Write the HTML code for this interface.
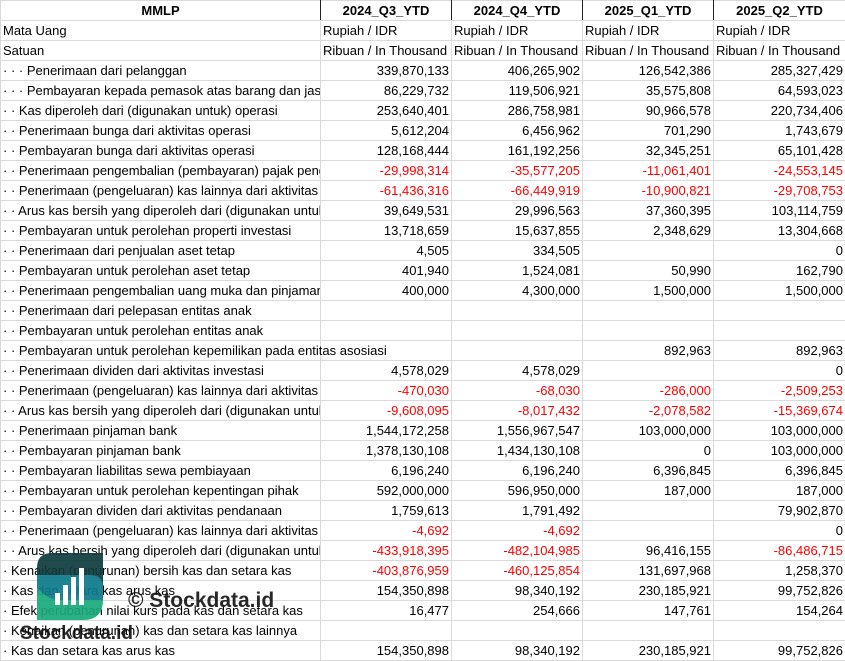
<!DOCTYPE html>
<html><head><meta charset="utf-8"><style>
html,body{margin:0;padding:0;background:#fff;width:845px;height:661px;overflow:hidden}
table{border-collapse:collapse;table-layout:fixed;width:845px;font-family:"Liberation Sans",sans-serif;font-size:13px;color:#000;position:absolute;left:0;top:0}
td{height:19px;padding:0 2px;border:1px solid #dadada;white-space:nowrap;overflow:hidden;line-height:19px;max-width:0}
tr.h td{font-weight:bold;text-align:center;border-right:1px solid #222;border-bottom:1px solid #dadada}
td.n{text-align:right}
.r{color:#f00}
td.s{overflow:visible;position:relative;z-index:1}
</style></head><body>
<table>
<colgroup><col style="width:320px"><col style="width:131px"><col style="width:131px"><col style="width:131px"><col style="width:132px"></colgroup>
<tr class="h"><td>MMLP</td><td>2024_Q3_YTD</td><td>2024_Q4_YTD</td><td>2025_Q1_YTD</td><td>2025_Q2_YTD</td></tr>
<tr><td>Mata Uang</td><td>Rupiah / IDR</td><td>Rupiah / IDR</td><td>Rupiah / IDR</td><td>Rupiah / IDR</td></tr>
<tr><td>Satuan</td><td>Ribuan / In Thousand</td><td>Ribuan / In Thousand</td><td>Ribuan / In Thousand</td><td>Ribuan / In Thousand</td></tr>
<tr><td>· · · Penerimaan dari pelanggan</td><td class="n">339,870,133</td><td class="n">406,265,902</td><td class="n">126,542,386</td><td class="n">285,327,429</td></tr>
<tr><td>· · · Pembayaran kepada pemasok atas barang dan jasa</td><td class="n">86,229,732</td><td class="n">119,506,921</td><td class="n">35,575,808</td><td class="n">64,593,023</td></tr>
<tr><td>· · Kas diperoleh dari (digunakan untuk) operasi</td><td class="n">253,640,401</td><td class="n">286,758,981</td><td class="n">90,966,578</td><td class="n">220,734,406</td></tr>
<tr><td>· · Penerimaan bunga dari aktivitas operasi</td><td class="n">5,612,204</td><td class="n">6,456,962</td><td class="n">701,290</td><td class="n">1,743,679</td></tr>
<tr><td>· · Pembayaran bunga dari aktivitas operasi</td><td class="n">128,168,444</td><td class="n">161,192,256</td><td class="n">32,345,251</td><td class="n">65,101,428</td></tr>
<tr><td>· · Penerimaan pengembalian (pembayaran) pajak penghasilan</td><td class="n r">-29,998,314</td><td class="n r">-35,577,205</td><td class="n r">-11,061,401</td><td class="n r">-24,553,145</td></tr>
<tr><td>· · Penerimaan (pengeluaran) kas lainnya dari aktivitas</td><td class="n r">-61,436,316</td><td class="n r">-66,449,919</td><td class="n r">-10,900,821</td><td class="n r">-29,708,753</td></tr>
<tr><td>· · Arus kas bersih yang diperoleh dari (digunakan untuk)</td><td class="n">39,649,531</td><td class="n">29,996,563</td><td class="n">37,360,395</td><td class="n">103,114,759</td></tr>
<tr><td>· · Pembayaran untuk perolehan properti investasi</td><td class="n">13,718,659</td><td class="n">15,637,855</td><td class="n">2,348,629</td><td class="n">13,304,668</td></tr>
<tr><td>· · Penerimaan dari penjualan aset tetap</td><td class="n">4,505</td><td class="n">334,505</td><td></td><td class="n">0</td></tr>
<tr><td>· · Pembayaran untuk perolehan aset tetap</td><td class="n">401,940</td><td class="n">1,524,081</td><td class="n">50,990</td><td class="n">162,790</td></tr>
<tr><td>· · Penerimaan pengembalian uang muka dan pinjaman</td><td class="n">400,000</td><td class="n">4,300,000</td><td class="n">1,500,000</td><td class="n">1,500,000</td></tr>
<tr><td>· · Penerimaan dari pelepasan entitas anak</td><td></td><td></td><td></td><td></td></tr>
<tr><td>· · Pembayaran untuk perolehan entitas anak</td><td></td><td></td><td></td><td></td></tr>
<tr><td class="s">· · Pembayaran untuk perolehan kepemilikan pada entitas asosiasi</td><td style="border-left-color:transparent"></td><td></td><td class="n">892,963</td><td class="n">892,963</td></tr>
<tr><td>· · Penerimaan dividen dari aktivitas investasi</td><td class="n">4,578,029</td><td class="n">4,578,029</td><td></td><td class="n">0</td></tr>
<tr><td>· · Penerimaan (pengeluaran) kas lainnya dari aktivitas</td><td class="n r">-470,030</td><td class="n r">-68,030</td><td class="n r">-286,000</td><td class="n r">-2,509,253</td></tr>
<tr><td>· · Arus kas bersih yang diperoleh dari (digunakan untuk)</td><td class="n r">-9,608,095</td><td class="n r">-8,017,432</td><td class="n r">-2,078,582</td><td class="n r">-15,369,674</td></tr>
<tr><td>· · Penerimaan pinjaman bank</td><td class="n">1,544,172,258</td><td class="n">1,556,967,547</td><td class="n">103,000,000</td><td class="n">103,000,000</td></tr>
<tr><td>· · Pembayaran pinjaman bank</td><td class="n">1,378,130,108</td><td class="n">1,434,130,108</td><td class="n">0</td><td class="n">103,000,000</td></tr>
<tr><td>· · Pembayaran liabilitas sewa pembiayaan</td><td class="n">6,196,240</td><td class="n">6,196,240</td><td class="n">6,396,845</td><td class="n">6,396,845</td></tr>
<tr><td>· · Pembayaran untuk perolehan kepentingan pihak</td><td class="n">592,000,000</td><td class="n">596,950,000</td><td class="n">187,000</td><td class="n">187,000</td></tr>
<tr><td>· · Pembayaran dividen dari aktivitas pendanaan</td><td class="n">1,759,613</td><td class="n">1,791,492</td><td></td><td class="n">79,902,870</td></tr>
<tr><td>· · Penerimaan (pengeluaran) kas lainnya dari aktivitas</td><td class="n r">-4,692</td><td class="n r">-4,692</td><td></td><td class="n">0</td></tr>
<tr><td>· · Arus kas bersih yang diperoleh dari (digunakan untuk)</td><td class="n r">-433,918,395</td><td class="n r">-482,104,985</td><td class="n">96,416,155</td><td class="n r">-86,486,715</td></tr>
<tr><td>· Kenaikan (penurunan) bersih kas dan setara kas</td><td class="n r">-403,876,959</td><td class="n r">-460,125,854</td><td class="n">131,697,968</td><td class="n">1,258,370</td></tr>
<tr><td>· Kas dan setara kas arus kas</td><td class="n">154,350,898</td><td class="n">98,340,192</td><td class="n">230,185,921</td><td class="n">99,752,826</td></tr>
<tr><td>· Efek perubahan nilai kurs pada kas dan setara kas</td><td class="n">16,477</td><td class="n">254,666</td><td class="n">147,761</td><td class="n">154,264</td></tr>
<tr><td>· Kenaikan (penurunan) kas dan setara kas lainnya</td><td></td><td></td><td></td><td></td></tr>
<tr><td>· Kas dan setara kas arus kas</td><td class="n">154,350,898</td><td class="n">98,340,192</td><td class="n">230,185,921</td><td class="n">99,752,826</td></tr>
</table>
<svg style="position:absolute;left:0;top:0;z-index:2" width="845" height="661">
<defs><clipPath id="c"><path d="M52 553 H103 V600 Q103 620 83 620 H37 V568 Q37 553 52 553 Z"/></clipPath></defs>
<g clip-path="url(#c)" opacity="0.92">
<rect x="37" y="553" width="66" height="67" fill="#0e3b3c"/>
<path d="M37 575 H90 Q103 575 103 588 V600 H37 Z" fill="#0b7a8a"/>
<path d="M37 588 Q48 600 60 600 H103 V620 H37 Z" fill="#19a97a"/>
</g>
<g fill="#fff">
<rect x="55" y="593" width="5" height="12"/>
<rect x="63" y="585" width="5" height="20"/>
<rect x="71" y="577" width="5" height="28"/>
<rect x="79" y="568" width="5" height="37"/>
</g>
<text x="20" y="639" font-family="Liberation Sans,sans-serif" font-weight="bold" font-size="19" fill="#111" opacity="0.9">Stockdata.id</text>
<text x="128" y="607" font-family="Liberation Sans,sans-serif" font-weight="bold" font-size="21" fill="#111" opacity="0.9">© Stockdata.id</text>
</svg>
</body></html>
